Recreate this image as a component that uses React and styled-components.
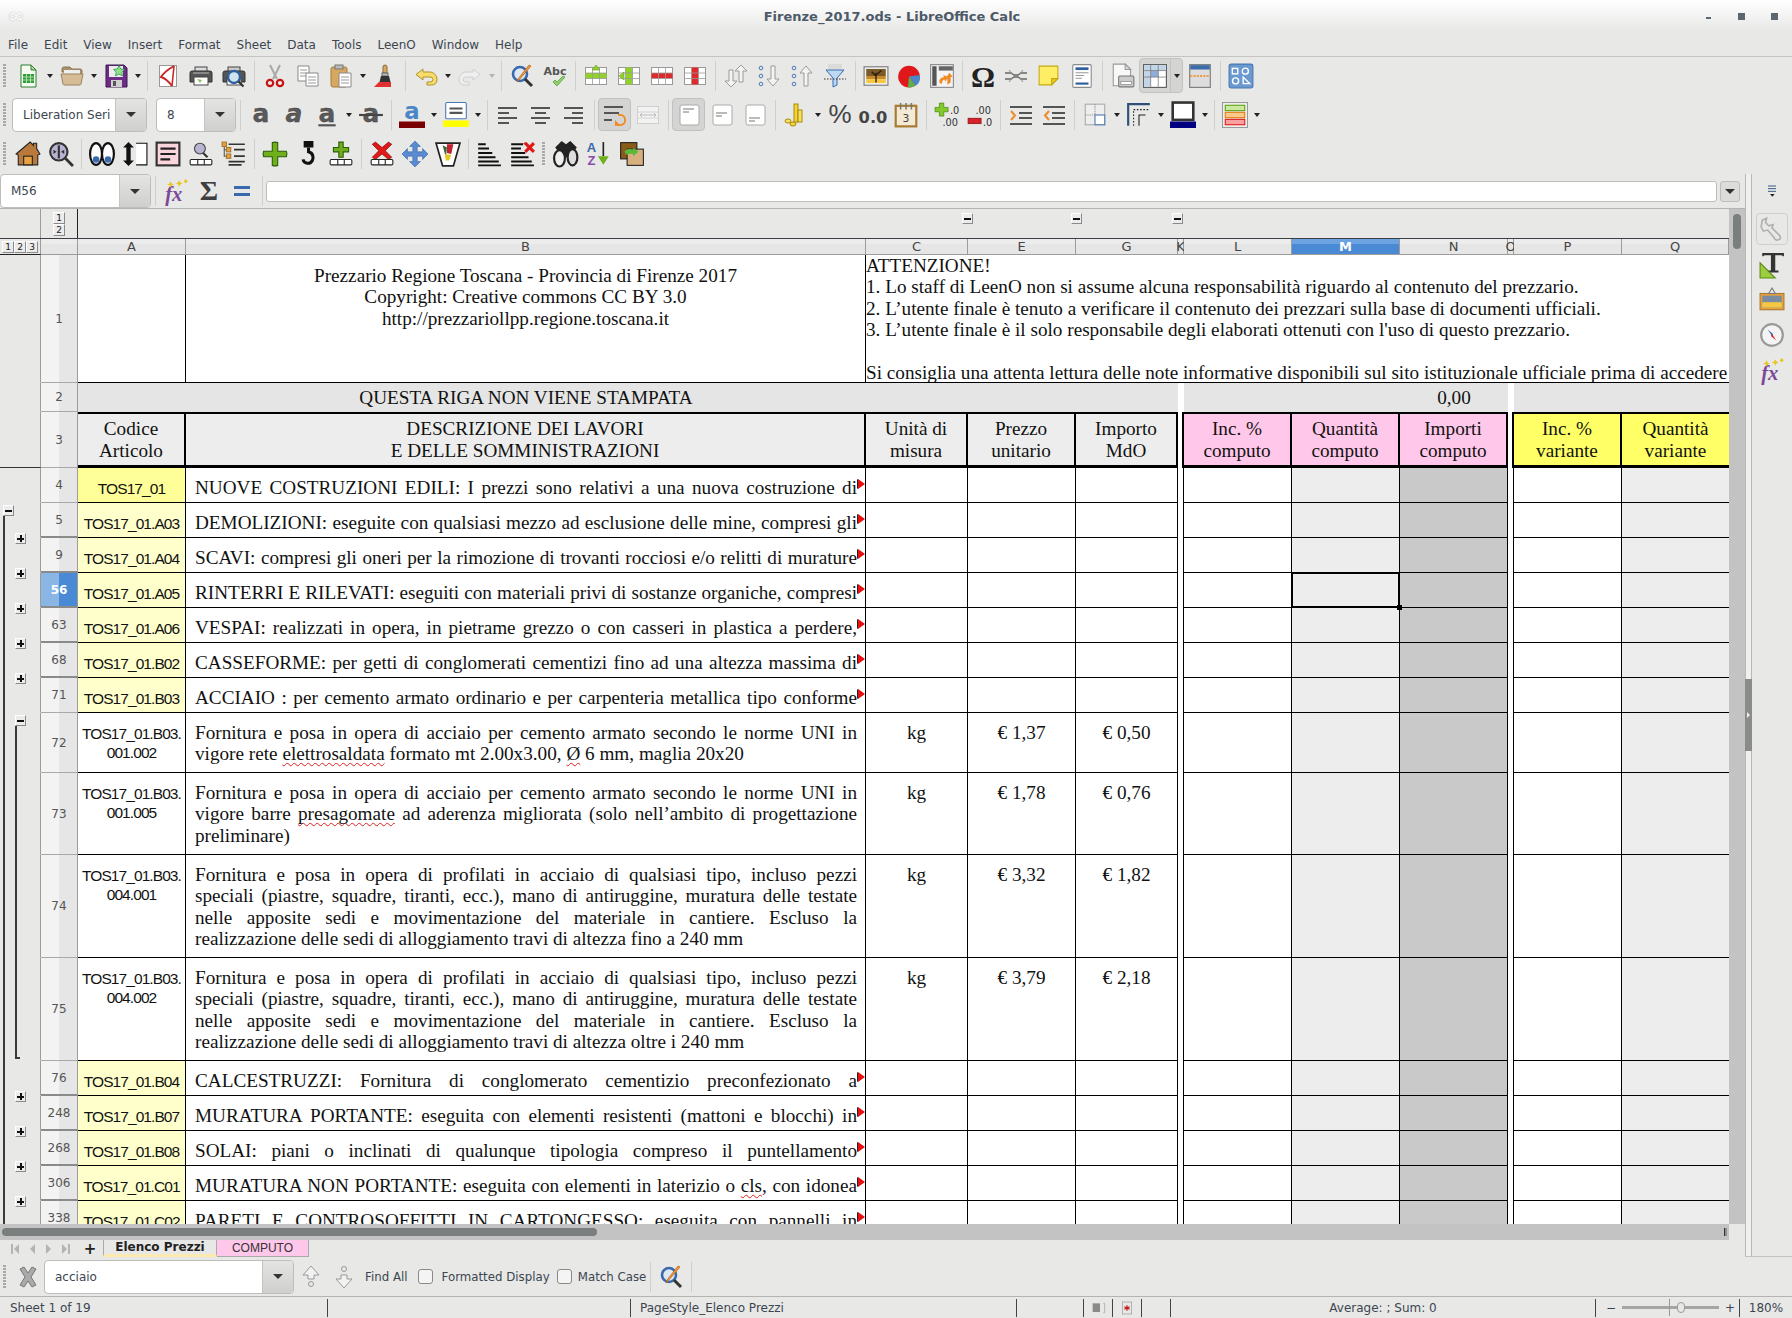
import React from "react";
import styled, { createGlobalStyle } from "styled-components";

const UI = '"DejaVu Sans", sans-serif';
const SERIF = '"Liberation Serif", serif';
const SANS = '"Liberation Sans", sans-serif';
const COLUMNS = "41px 37px 108px 680px 102px 108px 102px 6px 108px 108px 108px 6px 108px 107px";

const GlobalStyle = createGlobalStyle`
  html, body {
    margin: 0;
    background: #e8e8e7;
    overflow: hidden;
  }
  * { box-sizing: border-box; }
`;

/* ---------- icons ---------- */

const Svg = ({ s = 24, children }) => (
  <svg width={s} height={s} viewBox="0 0 24 24" overflow="visible">{children}</svg>
);

const TableGrid = ({ children }) => (
  <>
    <rect x="1.5" y="3.5" width="21" height="17" fill="#fff" stroke="#9a9a9a" />
    {children}
    <path d="M1.5 9h21M1.5 14.5h21M8.5 3.5v17M15.5 3.5v17" stroke="#9a9a9a" fill="none" strokeWidth=".8" />
  </>
);

const NewIcon = () => <Svg><path d="M5 1h10l5 5v17H5z" fill="#f6fbf2" stroke="#2a7d2a" /><path d="M15 1l5 5h-5z" fill="#b9dca0" stroke="#2a7d2a" /><rect x="7" y="10" width="11" height="9" fill="#2f9e3a" /><path d="M7 13h11M7 16h11M10.5 10v9M14.5 10v9" stroke="#d8f0d0" strokeWidth=".7" /></Svg>;
const OpenIcon = () => <Svg><path d="M2 8V5q0-2 2-2h6l2 2h8q2 0 2 2v3z" fill="#a8916a" stroke="#8d7850" /><rect x="4" y="6" width="16" height="4" fill="#eee" /><path d="M1 10h22l-2 10q0 1-2 1H5q-2 0-2-1z" fill="#d6bd95" stroke="#9a8460" /></Svg>;
const SaveIcon = () => <Svg><path d="M2 1h18l3 3v19H2z" fill="#6d2c85" stroke="#3c1650" /><rect x="5" y="2" width="14" height="11" fill="#ececec" /><rect x="7" y="16" width="11" height="7" fill="#cfcfcf" /><rect x="9" y="17" width="3" height="5" fill="#555" /><path d="M15 1.5l1.8 3.5 3.7.5-2.7 2.6.7 3.8-3.5-1.8-3.5 1.8.7-3.8L9.5 5.5l3.7-.5z" fill="#8fe08a" stroke="#2e9a48" strokeWidth=".8" /></Svg>;
const PdfIcon = () => <Svg><rect x="3.5" y="1.5" width="17" height="21" fill="#fff" stroke="#999" /><path d="M18 2Q9 7 5 13q6 2 11 9" fill="none" stroke="#c62828" strokeWidth="2" /><path d="M18 2l-2 20" stroke="#c62828" strokeWidth="1.6" /></Svg>;
const PrintIcon = () => <Svg><rect x="6" y="3" width="12" height="6" fill="#ddd" stroke="#444" /><path d="M3 7h18q2 0 2 2v9H1V9q0-2 2-2z" fill="#555" stroke="#333" /><path d="M4 9h16" stroke="#bbb" /><rect x="5" y="13" width="14" height="8" fill="#fff" stroke="#444" /><path d="M8 15l5 1-2 3" fill="#8cc36a" /></Svg>;
const PreviewIcon = () => <Svg><rect x="6" y="3" width="12" height="6" fill="#ccc" stroke="#444" /><path d="M3 7h18q2 0 2 2v9H1V9q0-2 2-2z" fill="#555" stroke="#333" /><rect x="5" y="13" width="14" height="8" fill="#fff" stroke="#444" /><circle cx="12" cy="13" r="6" fill="#cfe3ee" stroke="#2f5f9e" strokeWidth="2.4" /><path d="M16.5 17.5l5 5" stroke="#333" strokeWidth="2.2" /></Svg>;
const CutIcon = () => <Svg><path d="M7 1l7 14M17 1l-7 14" stroke="#a8a8a8" strokeWidth="2" /><circle cx="7" cy="19" r="3.2" fill="none" stroke="#c61414" strokeWidth="2.2" /><circle cx="17" cy="19" r="3.2" fill="none" stroke="#c61414" strokeWidth="2.2" /></Svg>;
const CopyIcon = () => <Svg><path d="M2 2h11v15H2z" fill="#fff" stroke="#888" /><path d="M4 6h7M4 9h7M4 12h7" stroke="#999" /><path d="M10 9h12v13H10z" fill="#fff" stroke="#888" /><path d="M12 13h8M12 16h8M12 19h8" stroke="#999" /></Svg>;
const PasteIcon = () => <Svg><rect x="2" y="3" width="16" height="20" rx="2" fill="#d9a860" stroke="#a57a38" /><rect x="6" y="1" width="8" height="4" fill="#bbb" stroke="#777" /><path d="M10 9h12v14H10z" fill="#fff" stroke="#888" /><path d="M12 13h8M12 16h8M12 19h8" stroke="#999" /></Svg>;
const CloneIcon = () => <Svg><path d="M12 1q2 0 2 2v6h-4V3q0-2 2-2z" fill="#d9a860" stroke="#8a6a30" /><rect x="9" y="9" width="6" height="3" fill="#bbb" stroke="#666" /><path d="M8 12h8l2 8H6z" fill="#333" /><path d="M1 23l5-5h12v5z" fill="#e03030" /></Svg>;
const UndoIcon = () => <Svg><path d="M9 5L2 10.5 9 16v-3h7q3 0 3 2.5T16 18h-3v3h4q6 0 6-5.5T17 8H9z" fill="#f7dc6a" stroke="#b0922c" /></Svg>;
const RedoIcon = () => <Svg><path d="M15 5l7 5.5-7 5.5v-3H8q-3 0-3 2.5T8 18h3v3H7q-6 0-6-5.5T7 8h8z" fill="#efefef" stroke="#cfcfcf" /></Svg>;
const FindIcon = () => <Svg><circle cx="10" cy="10" r="7" fill="#dfe8f2" stroke="#3a6aae" strokeWidth="2.6" /><path d="M15 15l7 7" stroke="#333" strokeWidth="3" /><path d="M21 2L9 16l-2 2 1-3L19 1z" fill="#f09a3a" stroke="#b35f10" strokeWidth=".7" /></Svg>;
const SpellIcon = () => <Svg><text x="12" y="11" textAnchor="middle" fontFamily={UI} fontWeight="700" fontSize="11" fill="#555">Abc</text><path d="M10 18l4 4 8-9-2-1-6 6-2-2z" fill="#8fd06a" stroke="#4a9a30" strokeWidth=".7" /></Svg>;
const InsRowIcon = () => <Svg><TableGrid><rect x="1.5" y="9" width="21" height="5.5" fill="#92d02a" /></TableGrid><path d="M12 1l4 5H8z" fill="#92d02a" stroke="#6aa010" strokeWidth=".6" /></Svg>;
const InsColIcon = () => <Svg><TableGrid><rect x="8.5" y="3.5" width="7" height="17" fill="#92d02a" /></TableGrid><path d="M2 12l5-4v8z" fill="#92d02a" stroke="#6aa010" strokeWidth=".6" /></Svg>;
const DelRowIcon = () => <Svg><TableGrid><rect x="1.5" y="9" width="21" height="5.5" fill="#dd2a2a" /></TableGrid></Svg>;
const DelColIcon = () => <Svg><TableGrid><rect x="8.5" y="3.5" width="7" height="17" fill="#dd2a2a" /></TableGrid></Svg>;
const ArrowPath = ({ d }) => <path d={d} fill="#f4f4f4" stroke="#9a9a9a" />;
const SortIcon = () => <Svg><ArrowPath d="M5 6h4v11h4l-6 6-6-6h4z" /><ArrowPath d="M17 1l6 6h-4v11h-4V7h-4z" /></Svg>;
const Dots = ({ x = 4 }) => <g fill="none" stroke="#4a7ab8"><circle cx={x} cy="4" r="1.8" /><circle cx={x} cy="12" r="1.8" /><circle cx={x} cy="20" r="1.8" /></g>;
const SortAscIcon = () => <Svg><Dots /><ArrowPath d="M14 2h4v13h4l-6 7-6-7h4z" /></Svg>;
const SortDescIcon = () => <Svg><Dots /><ArrowPath d="M16 2l6 7h-4v13h-4V9h-4z" /></Svg>;
const FilterIcon = () => <Svg><rect x="5" y="0" width="14" height="5" fill="#d0d0d0" opacity=".6" /><path d="M3 6h18l-7 8v7l-4 2v-9z" fill="#bcd8f2" stroke="#3a6aae" /><path d="M1 15h22" stroke="#333" strokeDasharray="1.5 1.5" /></Svg>;
const ImageIcon = () => <Svg s={26}><rect x="1" y="3.5" width="22" height="17" fill="#f2f2f2" stroke="#777" /><rect x="3" y="5.5" width="18" height="7" fill="#7a5a28" /><rect x="3" y="12" width="18" height="3" fill="#c88a2a" /><rect x="3" y="15" width="18" height="3.5" fill="#f5c742" /><path d="M12 18V9M12 12L8 8M12 11l5-4" stroke="#2a1a0a" strokeWidth="1.2" /></Svg>;
const ChartIcon = () => <Svg s={26}><circle cx="12" cy="12.5" r="10" fill="#e0181c" /><path d="M12 12.5L22 11q1 7-4 10z" fill="#4a86c8" /><path d="M12 12.5L18 21q-3 2-7 1.5z" fill="#5fb04a" /></Svg>;
const PivotIcon = () => <Svg s={26}><rect x="1.5" y="1.5" width="21" height="21" fill="#f4f4f4" stroke="#888" /><rect x="3" y="3" width="4" height="18" fill="#555" /><rect x="9" y="3" width="13" height="4" fill="#666" /><path d="M10 19q-2-5 4-6l-1-2 5 2-3 4-1-2q-2 1-2 4zM19 9l3 4h-2v5l-3 2v-7h-1z" fill="#f08a24" /></Svg>;
const OmegaIcon = () => <Svg s={30}><text x="12" y="21" textAnchor="middle" fontFamily={SERIF} fontWeight="700" fontSize="24" fill="#222">Ω</text></Svg>;
const LinkIcon = () => <Svg><path d="M1 9h6l3 2h4l3-2h6M1 15h6l3-2h4l3 2h6" fill="none" stroke="#666" strokeWidth="1.4" /><path d="M5 6l3 4M5 18l3-4M19 6l-3 4M19 18l-3-4" stroke="#888" /></Svg>;
const NoteIcon = () => <Svg s={25}><path d="M3 3h18v12l-6 6H3z" fill="#fdee66" stroke="#c8a810" /><path d="M15 21v-6h6z" fill="#e8c820" stroke="#c8a810" /></Svg>;
const HeadFootIcon = () => <Svg s={26}><rect x="3.5" y="1.5" width="17" height="21" rx="1" fill="#fff" stroke="#8a8a8a" /><rect x="6" y="4" width="12" height="2.5" fill="#2f5f9e" /><path d="M6 9h12M6 11.5h8M6 14h6" stroke="#999" /><rect x="6" y="18" width="12" height="2" fill="#2f5f9e" /></Svg>;
const PrintAreaIcon = () => <Svg s={26}><path d="M3 1h11l5 5v15H3z" fill="#f8f8f8" stroke="#999" /><path d="M14 1l5 5h-5z" fill="#ddd" stroke="#999" /><rect x="8" y="12" width="14" height="10" rx="1" fill="#ccc" stroke="#777" /><rect x="10" y="17" width="10" height="3" fill="#fff" stroke="#777" strokeWidth=".6" /></Svg>;
const FreezeIcon = () => <Svg s={26}><rect x="1.5" y="1.5" width="21" height="21" fill="#fff" stroke="#555" /><rect x="2" y="2" width="20" height="5" fill="#c2d4e8" /><rect x="2" y="7" width="6" height="15" fill="#c2d4e8" /><rect x="8" y="7" width="7" height="6" fill="#8eb0d8" /><path d="M8 2v20M15 2v20M2 7h20M2 13h20" stroke="#777" strokeWidth=".7" /></Svg>;
const SplitIcon = () => <Svg s={26}><rect x="2.5" y="1.5" width="19" height="21" fill="#ddd" stroke="#777" /><rect x="3" y="2" width="18" height="4" fill="#3a6aa8" /><path d="M3 12h18" stroke="#f08a24" strokeWidth="1.4" strokeDasharray="2 1" /></Svg>;
const ShapesIcon = () => <Svg s={26}><rect x="1" y="1" width="22" height="22" rx="2" fill="#6a98d0" stroke="#4a78b0" /><rect x="4" y="5" width="5" height="5" fill="none" stroke="#fff" strokeWidth="1.3" /><circle cx="16" cy="7.5" r="2.8" fill="none" stroke="#fff" strokeWidth="1.3" /><circle cx="7" cy="16.5" r="2.8" fill="none" stroke="#fff" strokeWidth="1.3" /><path d="M14 13v6h6z" fill="none" stroke="#fff" strokeWidth="1.3" /></Svg>;

const Glyph = ({ deco, slant, sw }) => (
  <Svg s={26}>
    <text x="12" y="18" textAnchor="middle" fontFamily={UI} fontWeight="700" fontStyle={slant ? "italic" : "normal"} fontSize="23" fill="#5a5a5a" stroke="#333" strokeWidth=".3">a</text>
    {deco && <path d="M4 21.5h16" stroke="#555" strokeWidth="2" />}
    {sw && <path d="M1 12h22" stroke="#444" strokeWidth="2" />}
  </Svg>
);
const BoldIcon = () => <Glyph />;
const ItalicIcon = () => <Glyph slant />;
const UnderIcon = () => <Glyph deco />;
const StrikeIcon = () => <Glyph sw />;
const FontColorIcon = () => <Svg s={26}><text x="12" y="16" textAnchor="middle" fontFamily={UI} fontWeight="700" fontSize="21" fill="#4a86c8">a</text><rect x="0" y="18" width="24" height="6" fill="#7a0000" /></Svg>;
const BgColorIcon = () => <Svg s={26}><rect x="2.5" y="0.5" width="19" height="15" rx="1" fill="#fff" stroke="#4a78b0" /><path d="M6 6h12M6 10h12" stroke="#555" strokeWidth="2" /><rect x="0" y="17" width="24" height="6" fill="#ffff00" /></Svg>;
const Lines = ({ rows }) => <g stroke="#555" strokeWidth="2">{rows.map((r, i) => <path key={i} d={`M${r[0]} ${r[2]}h${r[1]}`} />)}</g>;
const AlignLeft = () => <Svg><Lines rows={[[2, 19, 5], [2, 11, 10], [2, 19, 15], [2, 11, 20]]} /></Svg>;
const AlignCenter = () => <Svg><Lines rows={[[2, 19, 5], [6, 11, 10], [2, 19, 15], [6, 11, 20]]} /></Svg>;
const AlignRight = () => <Svg><Lines rows={[[2, 19, 5], [10, 11, 10], [2, 19, 15], [10, 11, 20]]} /></Svg>;
const WrapIcon = () => <Svg><Lines rows={[[1, 19, 4], [1, 15, 10], [1, 8, 17]]} /><path d="M14 22q9 1 8-6-1-5-7-4" fill="none" stroke="#f08a24" strokeWidth="1.8" /><path d="M12 17l5 5-5 1z" fill="#f08a24" /></Svg>;
const MergeIcon = () => <Svg><rect x="1.5" y="3.5" width="21" height="17" fill="#f2f2f2" stroke="#cfcfcf" /><path d="M1.5 9h21M1.5 15h21" stroke="#d4d4d4" /><path d="M4 12h16M4 12l2-2M4 12l2 2M20 12l-2-2M20 12l-2 2" stroke="#bbb" fill="none" /></Svg>;
const VAlign = ({ y }) => <Svg><rect x="3" y="2" width="19" height="20" rx="2" fill="#fff" stroke="#aaa" /><path d={`M6 ${y}h11M6 ${y + 3}h6`} stroke="#777" strokeWidth="1.2" /></Svg>;
const VTop = () => <VAlign y={6} />;
const VMid = () => <VAlign y={10} />;
const VBot = () => <VAlign y={15} />;
const CoinsIcon = () => <Svg><rect x="10" y="1" width="4" height="18" fill="#f2d432" stroke="#a88a10" /><rect x="14" y="7" width="4" height="12" fill="#f7e05a" stroke="#a88a10" /><ellipse cx="4" cy="18" rx="3" ry="2" fill="#f7e05a" stroke="#a88a10" /><ellipse cx="9" cy="21" rx="3" ry="2" fill="#f2d432" stroke="#a88a10" /></Svg>;
const TextIcon = ({ children, size = 22, sans }) => <Svg s={26}><text x="12" y="19" textAnchor="middle" fontFamily={sans ? SANS : UI} fontWeight={sans ? 400 : 700} fontSize={size} fill="#444">{children}</text></Svg>;
const PercentIcon = () => <TextIcon size={24} sans>%</TextIcon>;
const NumberIcon = () => <TextIcon size={15}>0.0</TextIcon>;
const DateIcon = () => <Svg s={26}><rect x="2.5" y="3.5" width="19" height="19" fill="#f4e9d4" stroke="#a87a30" strokeWidth="2" /><path d="M7 1v6M12 1v6M17 1v6" stroke="#777" strokeWidth="1.4" /><text x="12" y="18" textAnchor="middle" fontFamily={UI} fontSize="10" fill="#444">3</text></Svg>;
const AddDecIcon = () => <Svg s={26}><path d="M5 1h4v4h4v4H9v4H5V9H1V5h4z" fill="#84c82c" stroke="#4a8a10" strokeWidth=".7" /><text x="19" y="11" textAnchor="middle" fontFamily={UI} fontSize="9" fill="#333">.0</text><text x="15" y="22" textAnchor="middle" fontFamily={UI} fontSize="9" fill="#333">.00</text></Svg>;
const DelDecIcon = () => <Svg s={26}><rect x="1" y="15" width="12" height="5" fill="#d8222a" stroke="#8a1010" strokeWidth=".7" /><text x="15" y="11" textAnchor="middle" fontFamily={UI} fontSize="9" fill="#333">.00</text><text x="19" y="22" textAnchor="middle" fontFamily={UI} fontSize="9" fill="#333">.0</text></Svg>;
const IndentIcon = () => <Svg><Lines rows={[[1, 22, 4], [10, 13, 10], [10, 13, 15], [1, 22, 21]]} /><path d="M2 8l4 4.5-4 4.5" fill="none" stroke="#f08a24" strokeWidth="2" /></Svg>;
const DedentIcon = () => <Svg><Lines rows={[[1, 22, 4], [10, 13, 10], [10, 13, 15], [1, 22, 21]]} /><path d="M7 8l-4 4.5 4 4.5" fill="none" stroke="#f08a24" strokeWidth="2" /></Svg>;
const BordersIcon = () => <Svg s={26}><rect x="3" y="2" width="18" height="19" fill="#eee" stroke="#aaa" /><rect x="12" y="12" width="9" height="9" fill="#fff" stroke="#4a78b0" /><path d="M3 12h9M12 2v10" stroke="#888" strokeDasharray="1 1" /></Svg>;
const BorderStyleIcon = () => <Svg s={26}><path d="M2 22V2h20" fill="none" stroke="#2f4f78" strokeWidth="2" /><path d="M7 22V7h14" fill="none" stroke="#222" strokeDasharray="1.5 1.5" /><path d="M12 22V12h6" fill="none" stroke="#222" /></Svg>;
const BorderColorIcon = () => <Svg s={26}><rect x="2.5" y="0.5" width="19" height="16" fill="#fff" stroke="#333" strokeWidth="2.4" /><rect x="0" y="18" width="24" height="6" fill="#000080" /></Svg>;
const CondIcon = () => <Svg s={26}><rect x="0.5" y="0.5" width="23" height="23" fill="#f6f6f6" stroke="#999" /><rect x="3" y="3" width="18" height="5" fill="#cbeaa0" stroke="#5aa010" /><rect x="3" y="9.5" width="18" height="5" fill="#fbc98a" stroke="#e07a10" /><rect x="3" y="16" width="18" height="5" fill="#fba0a0" stroke="#d81818" /></Svg>;

const HomeIcon = () => <Svg s={26}><path d="M1 12L14 1l3 3V2h3v5l3 5-2 1v9H3v-9z" fill="#b9793a" stroke="#222" /><rect x="8" y="14" width="8" height="8" fill="#e8a040" stroke="#222" /></Svg>;
const ZoomIcon = () => <Svg s={26}><circle cx="10" cy="10" r="8" fill="#b8b4d4" stroke="#333" strokeWidth="2" /><path d="M10 4v12" stroke="#333" strokeWidth="2" /><path d="M8 10l-3-2v4zM12 10l3-2v4z" fill="#333" /><path d="M16 16l7 7" stroke="#333" strokeWidth="2.6" /></Svg>;
const HideIcon = () => <Svg s={26}><ellipse cx="6.5" cy="12" rx="5.5" ry="10" fill="#fff" stroke="#111" strokeWidth="2" /><ellipse cx="17.5" cy="12" rx="5.5" ry="10" fill="#fff" stroke="#111" strokeWidth="2" /><circle cx="6.5" cy="17" r="3" fill="#3a6aae" /><circle cx="17.5" cy="17" r="3" fill="#3a6aae" /></Svg>;
const HeightIcon = () => <Svg s={26}><path d="M6 1l5 5H8v12h3l-5 5-5-5h3V6H1z" fill="#111" /><path d="M13 2h10v20H13" fill="#fff" stroke="#111" /></Svg>;
const FormIcon = () => <Svg s={26}><rect x="1.5" y="1.5" width="21" height="21" fill="#fcd4dc" stroke="#333" strokeWidth="2" /><path d="M5 7h14M5 12h14M5 17h9" stroke="#222" strokeWidth="2" /></Svg>;
const CellsBar = () => <g fill="#fff" stroke="#222"><rect x="2" y="17" width="20" height="5" rx="1" /><path d="M9 17v5M15 17v5" fill="none" /></g>;
const LensCellsIcon = () => <Svg s={26}><circle cx="11" cy="7" r="5" fill="#b8b4d4" stroke="#444" /><path d="M14 11l4 4" stroke="#333" strokeWidth="2" /><CellsBar /></Svg>;
const TreeIcon = () => <Svg s={26}><path d="M3 2v12h4M3 8h4" stroke="#555" fill="none" /><rect x="1" y="1" width="4" height="4" fill="#e8a040" stroke="#a87a30" /><rect x="5" y="6" width="4" height="4" fill="#e8a040" stroke="#a87a30" /><rect x="5" y="12" width="4" height="4" fill="#e8a040" stroke="#a87a30" /><path d="M7 3h15M12 8h10M12 14h10M7 19h15M7 22h12" stroke="#333" strokeWidth="1.5" /></Svg>;
const PlusIcon = () => <Svg s={26}><path d="M9.5 1.5q2.5-1 5 0v8h8q1 2.5 0 5h-8v8q-2.500 1-5 0v-8h-8q-1-2.500 0-5h8z" fill="#6db01c" stroke="#2f5a08" /></Svg>;
const HookIcon = () => <Svg s={26}><rect x="8" y="0" width="9" height="6" fill="#111" /><path d="M12.500 6v4c4 1 5 5 3.500 8-2 4-8 3-8.500-1" fill="none" stroke="#111" strokeWidth="2.800" /></Svg>;
const AddCellsIcon = () => <Svg s={26}><path d="M10 1h4v5h5v4h-5v5h-4v-5H5V6h5z" fill="#6db01c" stroke="#2f5a08" /><CellsBar /></Svg>;
const DelCellsIcon = () => <Svg s={26}><path d="M3 3l3-2 6 5 6-5 3 2-6 6 6 6-3 2-6-5-6 5-3-2 6-6z" fill="#e01818" stroke="#7a0808" strokeWidth=".6" /><CellsBar /></Svg>;
const MoveIcon = () => <Svg s={26}><path d="M12 0l5 5h-3v5h5V7l5 5-5 5v-3h-5v5h3l-5 5-5-5h3v-5H5v3l-5-5 5-5v3h5V5H7z" fill="#5a8ad0" stroke="#3a6aae" strokeWidth=".6" /></Svg>;
const PaintIcon = () => <Svg s={26}><path d="M1 2h22l-6 21H7z" fill="#fff" stroke="#222" strokeWidth="1.6" /><path d="M7 4l4 2-1 9z" fill="#2f6a3a" /><path d="M11 3h6l-2 9-4-1z" fill="#c02030" /><path d="M9 12l6 1-2 5h-3z" fill="#e8c820" /></Svg>;
const ListIcon = () => <Svg s={26}><path d="M2 3h7M2 7h10M2 11h13M2 15h16M2 19h19M2 22.5h21" stroke="#111" strokeWidth="1.8" /></Svg>;
const ListDelIcon = () => <Svg s={26}><path d="M2 3h11M2 7h9M2 11h13M2 15h16M2 19h19M2 22.5h21" stroke="#111" strokeWidth="1.8" /><path d="M13 2l3-1 3 3 3-3 2 2-3 3 3 3-2 2-3-3-3 3-2-2 3-3z" fill="#e01818" /></Svg>;
const BinocularIcon = () => <Svg s={26}><path d="M8 0l4 3 4-3 6 6-7 9H9L2 6z" fill="#222" /><ellipse cx="6" cy="16" rx="5" ry="7.5" fill="#eee" stroke="#222" strokeWidth="2" /><ellipse cx="18" cy="15" rx="4.5" ry="7.5" fill="#ddd" stroke="#222" strokeWidth="2" /></Svg>;
const AzIcon = () => <Svg s={26}><text x="5" y="10" textAnchor="middle" fontFamily={SANS} fontWeight="700" fontSize="12" fill="#3a6aae">A</text><text x="5" y="22" textAnchor="middle" fontFamily={SANS} fontWeight="700" fontSize="12" fill="#8a4aa8">Z</text><path d="M16 1v13" stroke="#222" strokeWidth="1.5" /><path d="M11 14h10l-5 8z" fill="#6db01c" /></Svg>;
const CopyRangeIcon = () => <Svg s={26}><rect x="1.5" y="1.5" width="15" height="15" fill="#8a5a18" stroke="#222" /><rect x="7.5" y="7.5" width="15" height="15" fill="#d8b080" stroke="#222" /><path d="M5 10q2-4 8-2V6l5 4-5 4v-2q-4-1-6 1z" fill="#5ab83a" /></Svg>;
const FxIcon = () => <Svg s={26}><text x="10" y="21" textAnchor="middle" fontFamily={SERIF} fontStyle="italic" fontWeight="700" fontSize="19" fill="#7a4a98">fx</text><path d="M6 5l1-2 1 2 2 1-2 1-1 2-1-2-2-1zM14 4l1-2 1 2 2 1-2 1-1 2-1-2-2-1zM20 2l1-1 1 1 1 1-1 1-1 1-1-1-1-1z" fill="#e8c820" /></Svg>;
const SigmaIcon = () => <Svg s={28}><text x="12" y="20" textAnchor="middle" fontFamily={SERIF} fontWeight="700" fontSize="24" fill="#3f3f3f">Σ</text></Svg>;
const EqualsIcon = () => <Svg s={24}><rect x="4" y="7" width="16" height="3" fill="#3a6aae" /><rect x="4" y="14" width="16" height="3" fill="#3a6aae" /></Svg>;
const CloseFindIcon = () => <Svg><path d="M4 4l4-2 4 6 4-6 4 2-5 8 5 8-4 2-4-6-4 6-4-2 5-8z" fill="#aaa" stroke="#777" /></Svg>;
const FindUpIcon = () => <Svg><path d="M12 1l8 9h-5v4H9v-4H4z" fill="#f2f2f2" stroke="#999" /><circle cx="12" cy="19" r="2.5" fill="none" stroke="#999" /></Svg>;
const FindDownIcon = () => <Svg><circle cx="12" cy="4" r="2.500" fill="none" stroke="#999" /><path d="M12 23l8-9h-5v-4H9v4H4z" fill="#f2f2f2" stroke="#999" /></Svg>;
const NavIcon = ({ d }) => <svg width="8" height="10" viewBox="0 0 8 10"><path d={d} fill="#b4b4b4" /></svg>;

const GRIP = "grip";
const SEP = "sep";
const DROP = "drop";

const TOOLS_FILE = [
  NewIcon, DROP, OpenIcon, DROP, SaveIcon, DROP, SEP, PdfIcon, PrintIcon, PreviewIcon, SEP,
  CutIcon, CopyIcon, PasteIcon, DROP, CloneIcon, SEP, UndoIcon, DROP, RedoIcon, "dropOff", SEP,
  FindIcon, SpellIcon, SEP, InsRowIcon, InsColIcon, DelRowIcon, DelColIcon, SEP,
  SortIcon, SortAscIcon, SortDescIcon, FilterIcon, SEP, ImageIcon, ChartIcon, PivotIcon, SEP,
  OmegaIcon, LinkIcon, NoteIcon, HeadFootIcon, SEP, PrintAreaIcon, "freeze", SplitIcon, SEP, ShapesIcon,
];
const TOOLS_FORMAT = [
  BoldIcon, ItalicIcon, UnderIcon, DROP, StrikeIcon, SEP, FontColorIcon, DROP, BgColorIcon, DROP, SEP,
  AlignLeft, AlignCenter, AlignRight, SEP, { on: WrapIcon }, MergeIcon, SEP, { on: VTop }, VMid, VBot, SEP,
  CoinsIcon, DROP, PercentIcon, NumberIcon, DateIcon, SEP, AddDecIcon, DelDecIcon, SEP, IndentIcon, DedentIcon, SEP,
  BordersIcon, DROP, BorderStyleIcon, DROP, BorderColorIcon, DROP, SEP, CondIcon, DROP,
];
const TOOLS_LEENO = [
  HomeIcon, ZoomIcon, SEP, HideIcon, HeightIcon, FormIcon, LensCellsIcon, TreeIcon, SEP,
  PlusIcon, HookIcon, AddCellsIcon, SEP, DelCellsIcon, MoveIcon, PaintIcon, SEP, ListIcon, ListDelIcon, GRIP,
  BinocularIcon, AzIcon, CopyRangeIcon,
];

/* ---------- chrome ---------- */

const Window = styled.div`
  width: 1792px;
  height: 1318px;
  display: flex;
  flex-direction: column;
  overflow: hidden;
  background: #e8e8e7;
  font: 12px ${UI};
  color: #3c4650;
`;

const TitleBar = styled.div`
  height: 32px;
  flex: none;
  display: grid;
  grid-template-columns: 1fr auto 1fr;
  align-items: center;
  padding: 0 15px 0 7px;
  background: linear-gradient(#ffffff 0, #e8e8e7 30px);
`;

const TitleText = styled.div`
  font-weight: 700;
  font-size: 13px;
  color: #4c5a68;
`;

const Logo = styled.div`
  color: #fff;
  font-size: 22px;
  line-height: 22px;
  text-shadow: 0 0 1px #999;
`;

const WinButtons = styled.div`
  display: flex;
  justify-content: flex-end;
  gap: 28px;
`;

const WinButton = styled.div`
  width: 5px;
  height: 5px;
  background: ${(p) => (p.$min ? "transparent" : "#5a6670")};
  border-bottom: ${(p) => (p.$min ? "2px solid #5a6670" : "0")};
  outline: ${(p) => (p.$min ? "0" : "1px solid #5a6670")};
`;

const MenuBar = styled.div`
  height: 25px;
  flex: none;
  display: flex;
  gap: 16px;
  align-items: center;
  padding: 1px 0 0 8px;
  border-bottom: 1px solid #c4c4c3;
`;

const MenuItem = styled.span`
  color: #3c4650;
`;

const Toolbar = styled.div`
  height: 39px;
  flex: none;
  display: flex;
  align-items: center;
  padding: 0 0 2px ${(p) => p.$pad || 3}px;
`;

const Grip = styled.div`
  width: 3px;
  height: 24px;
  margin: ${(p) => (p.$inner ? "0 4px 0 4px" : "0 5px 0 0")};
  flex: none;
  background: repeating-linear-gradient(#a8a8a8 0, #a8a8a8 2px, transparent 2px, transparent 3px);
`;

const Tool = styled.div`
  width: ${(p) => p.$w || 33}px;
  height: 33px;
  flex: none;
  margin: ${(p) => p.$m || 0};
  display: flex;
  align-items: center;
  justify-content: center;
  border-radius: 4px;
  background: ${(p) => (p.$on ? "#d4d4d3" : "transparent")};
  border: 1px solid ${(p) => (p.$on ? "#c2c2c1" : "transparent")};
`;

const ToggleGroup = styled.div`
  width: 44px;
  height: 35px;
  flex: none;
  display: flex;
  align-items: center;
  border-radius: 4px;
  background: #d4d4d3;
  border: 1px solid #c2c2c1;
`;

const ToggleMain = styled.div`
  width: 32px;
  height: 33px;
  display: flex;
  align-items: center;
  justify-content: center;
  border-right: 1px solid #c2c2c1;
`;

const DropArrow = styled.div`
  width: 11px;
  flex: none;
  display: flex;
  justify-content: center;
  &::before {
    content: "";
    border-left: 3.5px solid transparent;
    border-right: 3.5px solid transparent;
    border-top: 4px solid ${(p) => (p.$off ? "#b5b5b5" : "#222")};
  }
`;

const Separator = styled.div`
  width: 8px;
  height: 30px;
  flex: none;
  display: flex;
  justify-content: center;
  &::before {
    content: "";
    width: 1px;
    background: #cfcfce;
  }
`;

const Combo = styled.div`
  width: ${(p) => p.$w}px;
  height: ${(p) => p.$h || 34}px;
  flex: none;
  margin-left: ${(p) => p.$ml || 0}px;
  display: flex;
  align-items: stretch;
  background: #fff;
  border: 1px solid #bdbdbc;
  border-radius: 4px;
  overflow: hidden;
`;

const ComboValue = styled.div`
  flex: 1;
  display: flex;
  align-items: center;
  padding-left: 10px;
  color: #3c4650;
  white-space: nowrap;
  overflow: hidden;
`;

const ComboButton = styled.div`
  width: 31px;
  flex: none;
  display: flex;
  align-items: center;
  justify-content: center;
  background: linear-gradient(#e4e4e3, #cfcfce);
  border-left: 1px solid #c4c4c3;
  &::before {
    content: "";
    border-left: 5px solid transparent;
    border-right: 5px solid transparent;
    border-top: 5px solid #333;
  }
`;

const Main = styled.div`
  height: 1083px;
  flex: none;
  display: flex;
`;

const WorkArea = styled.div`
  width: 1745px;
  flex: none;
  display: flex;
  flex-direction: column;
`;

const FormulaBar = styled.div`
  height: 35px;
  flex: none;
  display: flex;
  align-items: center;
  border-bottom: 1px solid #b4b4b3;
`;

const FormulaInput = styled.div`
  width: 1451px;
  height: 21px;
  flex: none;
  background: #fff;
  border: 1px solid #bdbdbc;
  border-radius: 3px;
`;

const FormulaDrop = styled.div`
  width: 20px;
  height: 21px;
  flex: none;
  margin-left: 3px;
  display: flex;
  align-items: center;
  justify-content: center;
  background: #dcdcdb;
  border: 1px solid #bdbdbc;
  border-radius: 3px;
  &::before {
    content: "";
    border-left: 5px solid transparent;
    border-right: 5px solid transparent;
    border-top: 5px solid #333;
  }
`;

/* ---------- sheet ---------- */

const SheetArea = styled.div`
  height: 1015px;
  flex: none;
  display: flex;
`;

const Sheet = styled.div`
  width: 1729px;
  flex: none;
  display: flex;
  flex-direction: column;
`;

const ColumnOutline = styled.div`
  height: 29px;
  flex: none;
  position: relative;
  display: grid;
  grid-template-columns: 41px 37px 1fr;
`;

const OutlineBlank = styled.div`
  border-right: 1px solid ${(p) => p.$line || "#9c9c9b"};
  display: ${(p) => (p.$center ? "flex" : "block")};
  flex-direction: column;
  align-items: center;
  justify-content: center;
`;

const Level = styled.div`
  width: 12px;
  height: 12px;
  flex: none;
  display: flex;
  align-items: center;
  justify-content: center;
  font-size: 9px;
  color: #222;
  background: #ececec;
  border: 1px solid;
  border-color: #fff #8a8a8a #8a8a8a #fff;
`;

const LevelRow = styled.div`
  display: flex;
  padding: 2px 0 0 2px;
`;

const OutlineButton = styled.div`
  position: absolute;
  left: ${(p) => p.$x}px;
  top: ${(p) => p.$y}px;
  width: 11px;
  height: 11px;
  display: flex;
  align-items: center;
  justify-content: center;
  background: #ececec;
  border: 1px solid;
  border-color: #fff #8a8a8a #8a8a8a #fff;
  &::before {
    content: "";
    width: 7px;
    height: 2px;
    background: #111;
  }
  &::after {
    content: "";
    display: ${(p) => (p.$plus ? "block" : "none")};
    position: absolute;
    width: 2px;
    height: 7px;
    background: #111;
  }
`;

const OutlineLine = styled.div`
  position: absolute;
  left: ${(p) => p.$x}px;
  top: ${(p) => p.$y}px;
  width: 2px;
  height: ${(p) => p.$h}px;
  background: #3a3a3a;
  &::after {
    content: "";
    display: ${(p) => (p.$foot ? "block" : "none")};
    position: absolute;
    left: 0;
    bottom: 0;
    width: 5px;
    height: 2px;
    background: #3a3a3a;
  }
`;

const SheetRow = styled.div`
  height: ${(p) => p.$h}px;
  flex: none;
  display: grid;
  grid-template-columns: ${COLUMNS};
`;

const HeaderRow = styled(SheetRow)`
  border-top: 1px solid #3a3f44;
`;

const Corner = styled.div`
  background: #e8e8e7;
  border-right: 1px solid #9c9c9b;
  border-bottom: 1px solid ${(p) => p.$line || "transparent"};
`;

const ColHead = styled.div`
  display: flex;
  align-items: center;
  justify-content: center;
  font-size: 13px;
  color: ${(p) => (p.$active ? "#fff" : "#444")};
  font-weight: ${(p) => (p.$active ? 700 : 400)};
  background: ${(p) => (p.$active ? "linear-gradient(#6ca3e0 0 5px, #4a8ad4 5px)" : "linear-gradient(#ececec 0 5px, #e6e6e6 5px)")};
  border-right: 1px solid #9c9c9b;
  border-bottom: 1px solid #9c9c9b;
`;

const Rows = styled.div`
  position: relative;
  height: 969px;
  flex: none;
  overflow: hidden;
`;

const RowHead = styled.div`
  display: flex;
  align-items: center;
  justify-content: center;
  font-size: 12px;
  color: ${(p) => (p.$active ? "#fff" : "#555")};
  font-weight: ${(p) => (p.$active ? 700 : 400)};
  background: ${(p) => (p.$active ? "linear-gradient(90deg, #8ab6e6 50%, #4a8ad4 50%)" : "linear-gradient(90deg, #f3f3f3 50%, #e6e6e6 50%)")};
  border-right: 1px solid #9c9c9b;
  border-bottom: ${(p) => (p.$hidden ? "2px solid #8a8a8a" : "1px solid #a8a8a8")};
`;

const Cell = styled.div`
  position: relative;
  background: ${(p) => p.$bg || "#fff"};
  border-right: ${(p) => (p.$end ? 0 : "1px solid #000")};
  border-bottom: 1px solid #000;
`;

const Gap = styled.div`
  background: #fff;
  border-right: 1px solid #000;
`;

const CodeCell = styled(Cell)`
  padding-top: 11px;
  text-align: center;
  font: 15.5px/19px ${SANS};
  letter-spacing: -0.92px;
  color: #111;
  overflow: hidden;
`;

const TextCell = styled(Cell)`
  padding: 9px 8px 0 9px;
  font: 19.2px/21.4px ${SERIF};
  color: #111;
`;

const ValueCell = styled(Cell)`
  padding-top: 9px;
  text-align: center;
  font: 19.2px/21.4px ${SERIF};
  color: #111;
`;

const Line = styled.div`
  white-space: nowrap;
  text-align: ${(p) => (p.$last ? "left" : "justify")};
  text-align-last: ${(p) => (p.$last ? "left" : "justify")};
  word-spacing: ${(p) => (p.$last ? 0 : "-2px")};
  height: 21.4px;
`;

const Spell = styled.span`
  text-decoration: underline wavy #e02020 1px;
  text-underline-offset: 2px;
  text-decoration-skip-ink: none;
`;

const Flag = styled.div`
  position: absolute;
  right: 0;
  top: 11px;
  width: 0;
  height: 0;
  border-left: 7px solid #e81010;
  border-top: 5.5px solid transparent;
  border-bottom: 5.5px solid transparent;
  filter: drop-shadow(-1px 0 0 #222);
`;

const Cursor = styled.div`
  position: absolute;
  left: -1px;
  top: -1px;
  right: -1px;
  bottom: -1px;
  border: 2px solid #000;
  z-index: 2;
  &::after {
    content: "";
    position: absolute;
    right: -4px;
    bottom: -4px;
    width: 5px;
    height: 5px;
    background: #000;
  }
`;

const MergedCell = styled(Cell)`
  grid-column: ${(p) => p.$col};
  border-right: 0;
  overflow: hidden;
  font: 19.2px/21.4px ${SERIF};
  color: #111;
  white-space: nowrap;
`;

const TitleCell = styled(Cell)`
  padding-top: 10px;
  text-align: center;
  font: 19.2px/21.4px ${SERIF};
  color: #111;
`;

const GrayBand = styled.div`
  grid-column: ${(p) => p.$col || "auto"};
  display: flex;
  align-items: center;
  justify-content: center;
  background: #e5e5e5;
  font: 19.2px/21.4px ${SERIF};
  color: #111;
`;

const WhiteGap = styled.div`
  background: #fff;
`;

const HeadCell = styled.div`
  display: flex;
  flex-direction: column;
  align-items: center;
  justify-content: center;
  background: ${(p) => p.$bg || "#ededed"};
  border-top: 2px solid #000;
  border-bottom: 3px solid #000;
  border-right: ${(p) => (p.$end ? 0 : "2px solid #000")};
  font: 19.2px/21.7px ${SERIF};
  color: #111;
  text-align: center;
`;

const HeadGap = styled.div`
  background: #fff;
  border-right: 2px solid #000;
`;

const VScroll = styled.div`
  width: 16px;
  flex: none;
  padding: 5px 4px;
  background: #c2c3c2;
`;

const VThumb = styled.div`
  width: 8px;
  height: 35px;
  border-radius: 4px;
  background: #7b7e7e;
`;

const HScroll = styled.div`
  width: 1729px;
  height: 16px;
  flex: none;
  padding: 4px 2px;
  background: #c2c3c2;
  display: flex;
  justify-content: space-between;
`;

const HThumb = styled.div`
  width: 595px;
  height: 8px;
  border-radius: 4px;
  background: #7b7e7e;
`;

const HEnd = styled.div`
  width: 3px;
  height: 8px;
  border-left: 1px solid #333;
  background: #8e8e8e;
`;

const TabBar = styled.div`
  height: 17px;
  flex: none;
  display: flex;
  align-items: stretch;
`;

const TabNav = styled.div`
  width: 77px;
  flex: none;
  display: flex;
  align-items: center;
  gap: 9px;
  padding-left: 11px;
`;

const AddTab = styled.div`
  width: 26px;
  flex: none;
  display: flex;
  align-items: center;
  justify-content: center;
  font-size: 15px;
  font-weight: 700;
  color: #222;
`;

const Tab = styled.div`
  width: ${(p) => p.$w}px;
  display: flex;
  align-items: center;
  justify-content: center;
  font-weight: ${(p) => (p.$active ? 700 : 400)};
  color: ${(p) => (p.$active ? "#222" : "#333")};
  background: ${(p) => p.$bg || "transparent"};
  border-right: 1px solid #aaa;
  border-left: ${(p) => (p.$active ? "1px solid #aaa" : 0)};
  border-bottom: ${(p) => (p.$active ? "3px solid #fdeab0" : "1px solid #aaa")};
  font-family: ${(p) => (p.$active ? UI : SANS)};
`;

const Sidebar = styled.div`
  width: 47px;
  flex: none;
  display: flex;
  border-bottom: 1px solid #c2c2c1;
`;

const SideStrip = styled.div`
  width: 7px;
  flex: none;
  display: flex;
  align-items: center;
  border-left: 1px solid #b8b8b7;
  border-right: 1px solid #b8b8b7;
  background: #f0f0ef;
`;

const SideHandle = styled.div`
  width: 7px;
  margin-left: -1px;
  height: 72px;
  flex: none;
  display: flex;
  align-items: center;
  justify-content: center;
  background: #8a8c8c;
  &::before {
    content: "";
    border-left: 3px solid #eee;
    border-top: 3px solid transparent;
    border-bottom: 3px solid transparent;
  }
`;

const Deck = styled.div`
  flex: 1;
  display: flex;
  flex-direction: column;
  align-items: center;
  padding-top: 10px;
`;

const DeckMenu = styled.div`
  height: 18px;
  width: 30px;
  flex: none;
  margin-bottom: 11px;
  display: flex;
  justify-content: center;
`;

const DeckTool = styled.div`
  width: 32px;
  height: ${(p) => p.$h || 35}px;
  flex: none;
  display: flex;
  align-items: center;
  justify-content: center;
  border-radius: 4px;
  border: 1px solid ${(p) => (p.$on ? "#cfcfce" : "transparent")};
  margin-bottom: ${(p) => (p.$on ? 2 : 0)}px;
`;

const FindBar = styled.div`
  height: 40px;
  flex: none;
  display: flex;
  align-items: center;
  padding-left: 3px;
  border-bottom: 1px solid #b4b4b3;
`;

const FindLabel = styled.span`
  color: #3c4650;
  font-size: 11.8px;
  margin-left: ${(p) => p.$ml || 0}px;
  white-space: nowrap;
`;

const CheckBox = styled.div`
  width: 15px;
  height: 15px;
  flex: none;
  margin-left: ${(p) => p.$ml || 0}px;
  background: #f4f4f4;
  border: 1px solid #8a8a8a;
  border-radius: 3px;
`;

const StatusBar = styled.div`
  height: 21px;
  flex: none;
  display: flex;
  align-items: center;
`;

const StatusCell = styled.div`
  width: ${(p) => p.$w}px;
  height: 18px;
  flex: none;
  display: flex;
  align-items: center;
  justify-content: ${(p) => p.$justify || "flex-start"};
  padding-left: ${(p) => p.$pad || 0}px;
  border-right: ${(p) => (p.$last ? 0 : "1px solid #444")};
  color: #3c4650;
  white-space: nowrap;
`;

const Slider = styled.div`
  position: relative;
  width: 97px;
  height: 3px;
  margin: 0 6px;
  background: #a5a5a5;
`;

const SliderThumb = styled.div`
  position: absolute;
  left: 55px;
  top: -4px;
  width: 8px;
  height: 11px;
  background: #e8e8e7;
  border: 1px solid #999;
  border-radius: 5px;
`;

const SliderTick = styled.div`
  position: absolute;
  left: 47px;
  top: -7px;
  width: 1px;
  height: 17px;
  background: #999;
`;

/* ---------- data ---------- */

const P1 = "Fornitura e posa in opera di acciaio per cemento armato secondo le norme UNI in";
const PROFILE = [
  "Fornitura e posa in opera di profilati in acciaio di qualsiasi tipo, incluso pezzi",
  "speciali (piastre, squadre, tiranti, ecc.), mano di antiruggine, muratura delle testate",
  "nelle apposite sedi e movimentazione del materiale in cantiere. Escluso la",
];

const ROWS = [
  { n: 4, h: 35, code: ["TOS17_01"], top: true, text: ["NUOVE COSTRUZIONI EDILI: I prezzi sono relativi a una nuova costruzione di"] },
  { n: 5, h: 35, code: ["TOS17_01.A03"], text: ["DEMOLIZIONI: eseguite con qualsiasi mezzo ad esclusione delle mine, compresi gli"] },
  { n: 9, h: 35, code: ["TOS17_01.A04"], text: ["SCAVI: compresi gli oneri per la rimozione di trovanti rocciosi e/o relitti di murature"] },
  { n: 56, h: 35, code: ["TOS17_01.A05"], text: ["RINTERRI E RILEVATI: eseguiti con materiali privi di sostanze organiche, compresi"] },
  { n: 63, h: 35, code: ["TOS17_01.A06"], text: ["VESPAI: realizzati in opera, in pietrame grezzo o con casseri in plastica a perdere,"] },
  { n: 68, h: 35, code: ["TOS17_01.B02"], text: ["CASSEFORME: per getti di conglomerati cementizi fino ad una altezza massima di"] },
  { n: 71, h: 35, code: ["TOS17_01.B03"], text: ["ACCIAIO : per cemento armato ordinario e per carpenteria metallica tipo conforme"] },
  {
    n: 72, h: 60, code: ["TOS17_01.B03.", "001.002"], unit: "kg", price: "€ 1,37", mdo: "€ 0,50",
    text: [P1, <React.Fragment key="l">vigore rete <Spell>elettrosaldata</Spell> formato mt 2.00x3.00, <Spell>Ø</Spell> 6 mm, maglia 20x20</React.Fragment>],
  },
  {
    n: 73, h: 82, code: ["TOS17_01.B03.", "001.005"], unit: "kg", price: "€ 1,78", mdo: "€ 0,76",
    text: [P1, <React.Fragment key="l">vigore barre <Spell>presagomate</Spell> ad aderenza migliorata (solo nell’ambito di progettazione</React.Fragment>, "preliminare)"],
  },
  {
    n: 74, h: 103, code: ["TOS17_01.B03.", "004.001"], unit: "kg", price: "€ 3,32", mdo: "€ 1,82",
    text: [...PROFILE, "realizzazione delle sedi di alloggiamento travi di altezza fino a 240 mm"],
  },
  {
    n: 75, h: 103, code: ["TOS17_01.B03.", "004.002"], unit: "kg", price: "€ 3,79", mdo: "€ 2,18",
    text: [...PROFILE, "realizzazione delle sedi di alloggiamento travi di altezza oltre i 240 mm"],
  },
  { n: 76, h: 35, code: ["TOS17_01.B04"], text: ["CALCESTRUZZI: Fornitura di conglomerato cementizio preconfezionato a"] },
  { n: 248, h: 35, code: ["TOS17_01.B07"], text: ["MURATURA PORTANTE: eseguita con elementi resistenti (mattoni e blocchi) in"] },
  { n: 268, h: 35, code: ["TOS17_01.B08"], text: ["SOLAI: piani o inclinati di qualunque tipologia compreso il puntellamento"] },
  { n: 306, h: 35, code: ["TOS17_01.C01"], text: [<React.Fragment key="l">MURATURA NON PORTANTE: eseguita con elementi in laterizio o <Spell>cls</Spell>, con idonea</React.Fragment>] },
  { n: 338, h: 35, code: ["TOS17_01.C02"], text: ["PARETI E CONTROSOFFITTI IN CARTONGESSO: eseguita con pannelli in"] },
];

const COL_LETTERS = ["A", "B", "C", "E", "G", "K", "L", "M", "N", "O", "P", "Q"];
const PLUS_TOPS = [278, 313, 348, 383, 418, 836, 871, 906, 941];

function ToolRow({ items, grip = true, children }) {
  return (
    <Toolbar>
      {grip && <Grip />}
      {children}
      {items.map((It, i) => {
        if (It === SEP) return <Separator key={i} />;
        if (It === GRIP) return <Grip key={i} $inner />;
        if (It === DROP) return <DropArrow key={i} />;
        if (It === "dropOff") return <DropArrow key={i} $off />;
        if (It === "freeze") {
          return (
            <ToggleGroup key={i}>
              <ToggleMain><FreezeIcon /></ToggleMain>
              <DropArrow />
            </ToggleGroup>
          );
        }
        if (It.on) {
          const On = It.on;
          return <Tool key={i} $on><On /></Tool>;
        }
        return <Tool key={i}><It /></Tool>;
      })}
    </Toolbar>
  );
}

function DataRow({ row, next }) {
  const gap = next && next.n - row.n > 1;
  return (
    <SheetRow $h={row.h}>
      <Corner />
      <RowHead $hidden={gap} $active={row.n === 56}>{row.n}</RowHead>
      <CodeCell $bg={row.top ? "#ffff99" : row.unit ? "#fff" : "#ffffcc"}>
        {row.code.map((c) => <div key={c}>{c}</div>)}
      </CodeCell>
      <TextCell>
        {row.text.map((t, i) => {
          const multi = row.text.length > 1;
          return <Line key={i} $last={multi && i === row.text.length - 1}>{t}</Line>;
        })}
        {!row.unit && <Flag />}
      </TextCell>
      <ValueCell>{row.unit}</ValueCell>
      <ValueCell>{row.price}</ValueCell>
      <ValueCell>{row.mdo}</ValueCell>
      <Gap />
      <Cell />
      <Cell $bg="#ededed">{row.n === 56 && <Cursor />}</Cell>
      <Cell $bg="#c9c9c9" />
      <Gap />
      <Cell />
      <Cell $bg="#ededed" $end />
    </SheetRow>
  );
}

export default function App() {
  return (
    <Window>
      <GlobalStyle />
      <TitleBar>
        <Logo>∞</Logo>
        <TitleText>Firenze_2017.ods - LibreOffice Calc</TitleText>
        <WinButtons>
          <WinButton $min />
          <WinButton />
          <WinButton />
        </WinButtons>
      </TitleBar>
      <MenuBar>
        {["File", "Edit", "View", "Insert", "Format", "Sheet", "Data", "Tools", "LeenO", "Window", "Help"].map((m) => (
          <MenuItem key={m}>{m}</MenuItem>
        ))}
      </MenuBar>

      <ToolRow items={TOOLS_FILE} />
      <ToolRow items={TOOLS_FORMAT}>
        <Combo $w={135} $ml={1}><ComboValue>Liberation Seri</ComboValue><ComboButton /></Combo>
        <Combo $w={80} $ml={9}><ComboValue>8</ComboValue><ComboButton /></Combo>
        <Separator />
      </ToolRow>
      <ToolRow items={TOOLS_LEENO} />

      <Main>
        <WorkArea>
          <FormulaBar>
            <Combo $w={151}><ComboValue>M56</ComboValue><ComboButton /></Combo>
            <Separator />
            <Tool><FxIcon /></Tool>
            <Tool><SigmaIcon /></Tool>
            <Tool><EqualsIcon /></Tool>
            <Separator />
            <FormulaInput />
            <FormulaDrop />
          </FormulaBar>

          <SheetArea>
            <Sheet>
              <ColumnOutline>
                <OutlineBlank />
                <OutlineBlank $center $line="#222">
                  <Level>1</Level>
                  <Level>2</Level>
                </OutlineBlank>
                <div />
                <OutlineButton $x={962} $y={4} />
                <OutlineButton $x={1071} $y={4} />
                <OutlineButton $x={1172} $y={4} />
              </ColumnOutline>

              <HeaderRow $h={17}>
                <Corner $line="#222">
                  <LevelRow>
                    <Level>1</Level>
                    <Level>2</Level>
                    <Level>3</Level>
                  </LevelRow>
                </Corner>
                <ColHead />
                {COL_LETTERS.map((c) => <ColHead key={c} $active={c === "M"}>{c}</ColHead>)}
              </HeaderRow>

              <Rows>
                <SheetRow $h={128}>
                  <Corner />
                  <RowHead>1</RowHead>
                  <Cell />
                  <TitleCell>
                    Prezzario Regione Toscana - Provincia di Firenze 2017<br />
                    Copyright: Creative commons CC BY 3.0<br />
                    http://prezzariollpp.regione.toscana.it
                  </TitleCell>
                  <MergedCell $col="5 / -1">
                    ATTENZIONE!<br />
                    1. Lo staff di LeenO non si assume alcuna responsabilità riguardo al contenuto del prezzario.<br />
                    2. L’utente finale è tenuto a verificare il contenuto dei prezzari sulla base di documenti ufficiali.<br />
                    3. L’utente finale è il solo responsabile degli elaborati ottenuti con l'uso di questo prezzario.<br />
                    <br />
                    Si consiglia una attenta lettura delle note informative disponibili sul sito istituzionale ufficiale prima di accedere
                  </MergedCell>
                </SheetRow>

                <SheetRow $h={29}>
                  <Corner />
                  <RowHead>2</RowHead>
                  <GrayBand />
                  <GrayBand>QUESTA RIGA NON VIENE STAMPATA</GrayBand>
                  <GrayBand $col="span 3" />
                  <WhiteGap />
                  <GrayBand $col="span 2" />
                  <GrayBand>0,00</GrayBand>
                  <WhiteGap />
                  <GrayBand $col="span 2" />
                </SheetRow>

                <SheetRow $h={56}>
                  <Corner $line="#333" />
                  <RowHead>3</RowHead>
                  <HeadCell>Codice<br />Articolo</HeadCell>
                  <HeadCell>DESCRIZIONE DEI LAVORI<br />E DELLE SOMMINISTRAZIONI</HeadCell>
                  <HeadCell>Unità di<br />misura</HeadCell>
                  <HeadCell>Prezzo<br />unitario</HeadCell>
                  <HeadCell>Importo<br />MdO</HeadCell>
                  <HeadGap />
                  <HeadCell $bg="#ffc7e9">Inc. %<br />computo</HeadCell>
                  <HeadCell $bg="#ffc7e9">Quantità<br />computo</HeadCell>
                  <HeadCell $bg="#ffc7e9">Importi<br />computo</HeadCell>
                  <HeadGap />
                  <HeadCell $bg="#ffff66">Inc. %<br />variante</HeadCell>
                  <HeadCell $bg="#ffff66" $end>Quantità<br />variante</HeadCell>
                </SheetRow>

                {ROWS.map((r, i) => <DataRow key={r.n} row={r} next={ROWS[i + 1]} />)}

                <OutlineButton $x={3} $y={250} />
                <OutlineLine $x={3} $y={261} $h={720} />
                {PLUS_TOPS.map((y) => <OutlineButton key={y} $plus $x={15} $y={y} />)}
                <OutlineButton $x={15} $y={460} />
                <OutlineLine $x={15} $y={471} $h={333} $foot />
              </Rows>
            </Sheet>
            <VScroll><VThumb /></VScroll>
          </SheetArea>

          <HScroll><HThumb /><HEnd /></HScroll>

          <TabBar>
            <TabNav>
              <NavIcon d="M0 0h2v10H0zM8 0v10L3 5z" />
              <NavIcon d="M7 0v10L2 5z" />
              <NavIcon d="M1 0v10l5-5z" />
              <NavIcon d="M6 0h2v10H6zM0 0v10l5-5z" />
            </TabNav>
            <AddTab>+</AddTab>
            <Tab $active $w={114}>Elenco Prezzi</Tab>
            <Tab $w={92} $bg="#ffc7e9">COMPUTO</Tab>
          </TabBar>
        </WorkArea>

        <Sidebar>
          <SideStrip><SideHandle /></SideStrip>
          <Deck>
            <DeckMenu>
              <Svg s={16}><path d="M6 3h12M6 7h12M6 11h12" stroke="#3a5a80" strokeWidth="1.5" /><path d="M9 15h7l-3.5 4z" fill="#222" /></Svg>
            </DeckMenu>
            <DeckTool $on $h={32}>
              <Svg s={26}><path d="M3 4l4-2-1 4 3 3 4-1-1 3 7 7q2 3-1 4t-4-2l-6-7-4 1-2-4z" fill="none" stroke="#b0b0b0" strokeWidth="1.5" /></Svg>
            </DeckTool>
            <DeckTool><Svg s={26}><path d="M3 1h20v3h-1l-1-1h-6v14h3v2H8v-2h3V3H5L4 4H3z" fill="#333" /><path d="M1 10v14h14z" fill="#9ccd40" stroke="#5a8a10" /></Svg></DeckTool>
            <DeckTool><Svg s={26}><rect x="1" y="6" width="22" height="15" fill="#e8a040" stroke="#a87a30" /><rect x="3" y="8" width="18" height="11" fill="#7a8aa0" /><rect x="3" y="14" width="18" height="5" fill="#f5c742" /><path d="M12 1l3 5H9z" fill="none" stroke="#777" /></Svg></DeckTool>
            <DeckTool><Svg s={26}><circle cx="12" cy="12" r="10" fill="#f4f4f4" stroke="#9a9a9a" strokeWidth="2" /><path d="M8 7l5 4-1 2z" fill="#3a6aae" /><path d="M16 17l-5-4 1-2z" fill="#d82020" /></Svg></DeckTool>
            <DeckTool><FxIcon /></DeckTool>
          </Deck>
        </Sidebar>
      </Main>

      <FindBar>
        <Grip />
        <Tool $w={24} $m="0 4px 0 5px"><CloseFindIcon /></Tool>
        <Combo $w={250}><ComboValue>acciaio</ComboValue><ComboButton /></Combo>
        <Tool><FindUpIcon /></Tool>
        <Tool><FindDownIcon /></Tool>
        <FindLabel $ml={5}>Find All</FindLabel>
        <CheckBox $ml={10} />
        <FindLabel $ml={9}>Formatted Display</FindLabel>
        <CheckBox $ml={7} />
        <FindLabel $ml={6}>Match Case</FindLabel>
        <Separator />
        <Tool><FindIcon /></Tool>
        <Separator />
      </FindBar>

      <StatusBar>
        <StatusCell $w={328} $pad={10}>Sheet 1 of 19</StatusCell>
        <StatusCell $w={303} />
        <StatusCell $w={386} $pad={9}>PageStyle_Elenco Prezzi</StatusCell>
        <StatusCell $w={67} />
        <StatusCell $w={29} $justify="center">
          <Svg s={16}><rect x="4" y="5" width="11" height="13" fill="#8a8a8a" /><path d="M20 5h2v14h-2" fill="none" stroke="#999" /></Svg>
        </StatusCell>
        <StatusCell $w={29} $justify="center">
          <Svg s={16}><rect x="5" y="3" width="14" height="18" fill="none" stroke="#999" /><path d="M12 8v8M8 10l8 4M16 10l-8 4" stroke="#c01818" strokeWidth="1.8" /></Svg>
        </StatusCell>
        <StatusCell $w={29} />
        <StatusCell $w={425} $justify="center">Average: ; Sum: 0</StatusCell>
        <StatusCell $w={144} $pad={10}>
          <span>−</span>
          <Slider><SliderTick /><SliderThumb /></Slider>
          <span>+</span>
        </StatusCell>
        <StatusCell $w={52} $justify="center" $last>180%</StatusCell>
      </StatusBar>
    </Window>
  );
}
